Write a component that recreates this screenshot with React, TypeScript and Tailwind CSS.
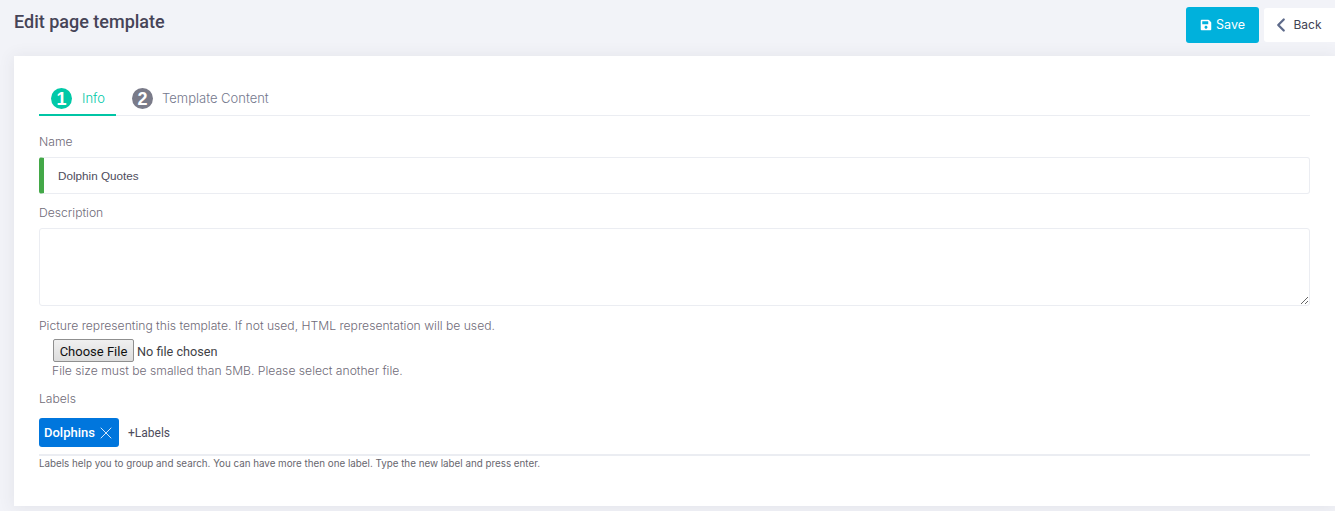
import { ChevronLeft, X } from "lucide-react"
import { FaSave } from "react-icons/fa"

const bodyFont = "font-['Inter',sans-serif]"

const App = () => {
  return (
    <div className={`h-screen w-full overflow-hidden bg-[#f2f3f8] pl-[14px] ${bodyFont}`}>
      {/* Header */}
      <div className="flex h-[56px] items-start justify-between">
        <h1 className="mt-[11px] font-['Roboto',sans-serif] text-[18px] leading-[22px] font-medium text-[#464457]">
          Edit page template
        </h1>
        <div className="mt-[7px] flex items-center gap-[5px]">
          <button className="flex h-[36px] w-[73px] items-center justify-center gap-[4px] rounded-[3px] bg-[#00b1dc] text-[12.5px] text-white">
            <FaSave className="size-[12px]" />
            Save
          </button>
          <button className="flex h-[34px] w-[71px] items-center justify-center rounded-l-[3px] bg-white pr-[7px] text-[12px] text-[#3f4254]">
            <ChevronLeft className="mr-[1px] size-[22px] text-[#5d6a8a]" strokeWidth={2.5} />
            Back
          </button>
        </div>
      </div>

      {/* Card */}
      <div className="h-[450px] bg-white pt-[26px] pr-[25px] pl-[25px] shadow-[0_1px_15px_1px_rgba(69,65,78,0.08)]">
        {/* Tabs */}
        <div className="flex h-[34px] items-start border-b border-[#ebedf2]">
          <div className="flex h-[34px] w-[77px] items-start gap-[10px] border-b-[2px] border-[#00c5a5] pt-[6px] pl-[12px]">
            <span className="flex size-[21px] items-center justify-center rounded-full bg-[#00c9a7] font-['Liberation_Sans',sans-serif] text-[18px] leading-none font-bold text-white">
              1
            </span>
            <span className="text-[13px] leading-[20px] font-light text-[#00c9a7]">Info</span>
          </div>
          <div className="ml-[16px] flex items-start gap-[9px] pt-[6px]">
            <span className="flex size-[21px] items-center justify-center rounded-full bg-[#7a7b89] font-['Liberation_Sans',sans-serif] text-[18px] leading-none font-bold text-white">
              2
            </span>
            <span className="text-[13px] leading-[20px] font-light text-[#74788d]">Template Content</span>
          </div>
        </div>

        {/* Name */}
        <label className="mt-[17px] block text-[12.15px] leading-[17px] font-light text-[#6f6b78]">Name</label>
        <div className="mt-[7px] flex h-[37px] items-center rounded-[3px] border border-l-[5px] border-[#ebedf2] border-l-[#43a848] pl-[14px] font-['Liberation_Sans',sans-serif] text-[11.7px] text-[#4d4c5c]">
          Dolphin Quotes
        </div>

        {/* Description */}
        <label className="mt-[10px] block text-[12.15px] leading-[17px] font-light text-[#6f6b78]">Description</label>
        <textarea className="mt-[7px] block h-[78px] w-full resize-y rounded-[3px] border border-[#ebedf2] outline-none" />

        {/* Picture */}
        <p className="mt-[11px] text-[12.15px] leading-[17px] font-light text-[#6f6b78]">
          Picture representing this template. If not used, HTML representation will be used.
        </p>
        <div className="mt-[5px] ml-[14px] font-['Roboto',sans-serif] text-[12.7px] text-[#3f3f46]">
          <input
            type="file"
            className="block h-[23px] w-[300px] leading-[23px] file:mr-[3px] file:h-[23px] file:w-[81px] file:rounded-[2px] file:border file:border-[#8f8f8f] file:bg-gradient-to-b file:from-[#f0f0f0] file:to-[#dddddd] file:text-[13px] file:text-[#111]"
          />
        </div>
        <p className="ml-[13px] text-[12.15px] leading-[17px] font-light text-[#6f6b78]">
          File size must be smalled than 5MB. Please select another file.
        </p>

        {/* Labels */}
        <label className="mt-[11px] block text-[12.15px] leading-[17px] font-light text-[#6f6b78]">Labels</label>
        <div className="mt-[11px] flex h-[38px] items-start gap-[9px] border-b-2 border-[#ebedf2] font-['Roboto',sans-serif]">
          <span className="flex h-[29px] w-[80px] items-center rounded-[3px] bg-[#0076dd] pl-[5px] text-[13px] font-medium text-white">
            Dolphins
            <X className="ml-[1px] size-[20px]" strokeWidth={1} />
          </span>
          <span className="text-[12px] leading-[31px] text-[#4d4c5c]">+Labels</span>
        </div>
        <p className="mt-[1px] text-[9.8px] leading-[14px] text-[#67666e]">
          Labels help you to group and search. You can have more then one label. Type the new label and press enter.
        </p>
      </div>
    </div>
  )
}

export default App
